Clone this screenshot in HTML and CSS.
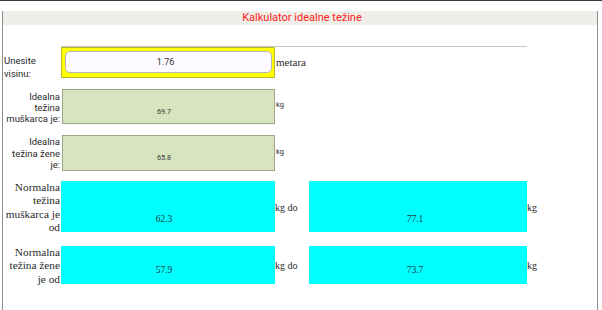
FILE: index.html
```html
<!DOCTYPE html>
<html lang="hr">
<head>
<meta charset="utf-8">
<title>Kalkulator idealne težine</title>
<link rel="stylesheet" href="styles.css">
</head>
<body>
<div class="topline"></div>
<div class="frame">
  <div class="title">Kalkulator idealne težine</div>
  <div class="rule"></div>

  <div class="row row-height">
    <div class="label sans label-height">Unesite<br>visinu:</div>
    <div class="yellow"><div class="input">1.76</div></div>
    <div class="unit unit-metara">metara</div>
  </div>

  <div class="row row-man">
    <div class="label sans label-green">Idealna<br>težina<br>muškarca je:</div>
    <div class="green">69.7</div>
    <div class="unit-small">kg</div>
  </div>

  <div class="row row-woman">
    <div class="label sans label-green2">Idealna<br>težina žene<br>je:</div>
    <div class="green green2">65.8</div>
    <div class="unit-small unit-small2">kg</div>
  </div>

  <div class="row row-nman">
    <div class="label serif label-cyan">Normalna<br>težina<br>muškarca je<br>od</div>
    <div class="cyan cyan-tall">62.3</div>
    <div class="unit unit-do">kg do</div>
    <div class="cyan cyan-tall cyan-right">77.1</div>
    <div class="unit unit-kg">kg</div>
  </div>

  <div class="row row-nwoman">
    <div class="label serif label-cyan">Normalna<br>težina žene<br>je od</div>
    <div class="cyan cyan-short">57.9</div>
    <div class="unit unit-do2">kg do</div>
    <div class="cyan cyan-short cyan-right">73.7</div>
    <div class="unit unit-kg2">kg</div>
  </div>
</div>
</body>
</html>
```

FILE: styles.css
```css
html, body {
  margin: 0;
  padding: 0;
  background: #ffffff;
}

body {
  width: 602px;
  height: 310px;
  overflow: hidden;
  font-family: Roboto, "Liberation Sans", sans-serif;
  color: #262626;
}

.topline {
  height: 1px;
  background: #383838;
}

.frame {
  box-sizing: border-box;
  margin-left: 2px;
  width: 596px;
  height: 308px;
  border-left: 1px solid #8c8c8c;
  border-right: 1px solid #8c8c8c;
  border-bottom: 1px solid #8c8c8c;
}

.title {
  margin-top: 10px;
  height: 14px;
  line-height: 14px;
  padding-left: 4px;
  background: #efeee8;
  color: #ff2020;
  font-family: Roboto, "Liberation Sans", sans-serif;
  font-size: 11px;
  text-align: center;
}

.rule {
  margin-top: 21px;
  margin-left: 58px;
  width: 466px;
  height: 1px;
  background: #c6c6c6;
}

.row {
  display: grid;
  grid-template-columns: 58px 214px 34px 218px 1fr;
  align-items: start;
}

.label {
  text-align: right;
  padding-right: 1px;
  color: #2a2a2a;
}

.sans {
  font-family: Roboto, "Liberation Sans", sans-serif;
  font-size: 9.5px;
  line-height: 11px;
}

.serif {
  font-family: "Liberation Serif", serif;
  font-size: 11.3px;
  line-height: 13.3px;
}

/* Row 1: height input */
.row-height {
  margin-top: 0;
}

.label-height {
  text-align: left;
  padding-left: 1px;
  margin-top: 7px;
  line-height: 13px;
}

.yellow {
  box-sizing: border-box;
  height: 31px;
  background: #ffff00;
  border: 1px solid #b8b830;
  padding: 3px 2px 4px 3px;
}

.input {
  box-sizing: border-box;
  height: 22px;
  line-height: 20px;
  background: #fdfbff;
  border: 1px solid #b4b4c0;
  border-radius: 5px;
  text-align: center;
  font-family: Roboto, "Liberation Sans", sans-serif;
  font-size: 9px;
  color: #333;
  padding-right: 6px;
}

.unit {
  font-family: "Liberation Serif", serif;
  font-size: 10px;
  line-height: 13px;
  color: #2a2a2a;
}

.unit-metara {
  font-size: 11px;
  margin-top: 9px;
  padding-left: 1px;
}

/* Ideal weight rows */
.row-man {
  margin-top: 9px;
}

.row-woman {
  margin-top: 11px;
}

.label-green {
  margin-top: 2px;
}

.label-green2 {
  margin-top: 1px;
  line-height: 11.5px;
}

.green {
  box-sizing: border-box;
  height: 35px;
  margin-left: 1px;
  background: #d7e4bd;
  border: 1px solid #9aa68a;
  padding-top: 17px;
  padding-right: 9px;
  line-height: 10px;
  text-align: center;
  font-family: Roboto, "Liberation Sans", sans-serif;
  font-size: 7.2px;
  color: #333;
}

.green2 {
  height: 36px;
}

.unit-small {
  font-family: Roboto, "Liberation Sans", sans-serif;
  font-size: 7.5px;
  line-height: 10px;
  margin-top: 11px;
  padding-left: 1px;
  color: #2a2a2a;
}

.unit-small2 {
  margin-top: 12px;
}

/* Normal weight rows */
.row-nman {
  margin-top: 10px;
}

.row-nwoman {
  margin-top: 12px;
}

.label-cyan {
  margin-top: 0;
}

.cyan {
  box-sizing: border-box;
  background: #00ffff;
  text-align: center;
  padding-right: 8px;
  font-family: "Liberation Serif", serif;
  font-size: 9.5px;
  line-height: 14px;
  color: #1a3a3a;
}

.cyan-right {
  padding-right: 6px;
}

.cyan-tall {
  height: 51px;
  padding-top: 31px;
}

.cyan-short {
  height: 38px;
  padding-top: 17px;
}

.unit-do {
  margin-top: 20px;
}

.unit-kg {
  margin-top: 20px;
}

.unit-do2 {
  margin-top: 13px;
}

.unit-kg2 {
  margin-top: 13px;
}
```
